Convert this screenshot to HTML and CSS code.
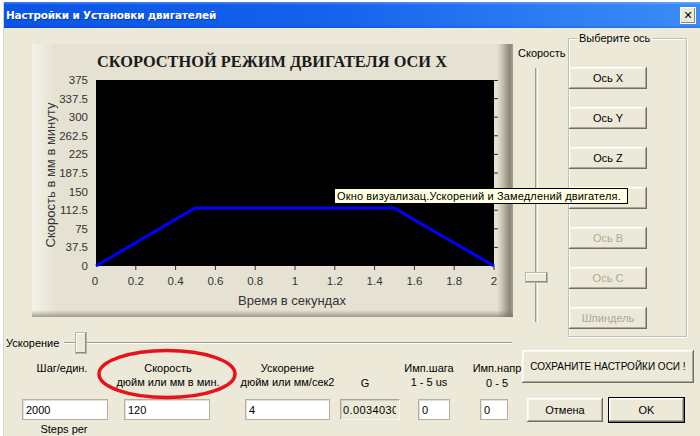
FILE: index.html
```html
<!DOCTYPE html>
<html lang="ru">
<head>
<meta charset="utf-8">
<title>Настройки и Установки двигателей</title>
<link rel="stylesheet" href="styles.css">
</head>
<body>
<div class="window">
  <div class="titlebar">
    <span class="title">Настройки и Установки двигателей</span>
    <span class="close">✕</span>
  </div>
  <div class="client">
    <div class="leftcol">
      <div class="chart">
        <svg class="chart-svg" width="481" height="273" viewBox="32 44 481 273" xmlns="http://www.w3.org/2000/svg">
          <text class="ctitle" x="97" y="67" textLength="350" lengthAdjust="spacingAndGlyphs">СКОРОСТНОЙ РЕЖИМ ДВИГАТЕЛЯ ОСИ X</text>
          <rect x="96" y="80" width="398" height="186" fill="#000"/>
          <g class="ticks" stroke="#2a2a2a" stroke-width="1">
            <path d="M494 80.5h4M494 98.6h4M494 117.2h4M494 135.8h4M494 154.4h4M494 173h4M494 191.6h4M494 210.2h4M494 228.8h4M494 247.4h4"/>
            <path d="M135.8 266v4M175.6 266v4M215.4 266v4M255.2 266v4M295 266v4M334.8 266v4M374.6 266v4M414.4 266v4M454.2 266v4M494 266v4"/>
          </g>
          <g class="ylab">
            <text x="88" y="84">375</text>
            <text x="88" y="102.6">337.5</text>
            <text x="88" y="121.2">300</text>
            <text x="88" y="139.8">262.5</text>
            <text x="88" y="158.4">225</text>
            <text x="88" y="177">187.5</text>
            <text x="88" y="195.6">150</text>
            <text x="88" y="214.2">112.5</text>
            <text x="88" y="232.8">75</text>
            <text x="88" y="251.4">37.5</text>
            <text x="88" y="270">0</text>
          </g>
          <g class="xlab">
            <text x="95" y="285">0</text>
            <text x="135.8" y="285">0.2</text>
            <text x="175.6" y="285">0.4</text>
            <text x="215.4" y="285">0.6</text>
            <text x="255.2" y="285">0.8</text>
            <text x="295" y="285">1</text>
            <text x="334.8" y="285">1.2</text>
            <text x="374.6" y="285">1.4</text>
            <text x="414.4" y="285">1.6</text>
            <text x="454.2" y="285">1.8</text>
            <text x="494" y="285">2</text>
          </g>
          <text class="axtitle" x="292" y="305">Время в секундах</text>
          <text class="axtitle" x="50" y="179.5" transform="rotate(-90 50 175)">Скорость в мм в минуту</text>
          <polyline points="96,266 195,208 394,208 494,266" fill="none" stroke="#0000ff" stroke-width="3" stroke-linejoin="miter"/>
        </svg>
      </div>
      <div class="accel">
        <span class="accel-label">Ускорение</span>
        <div class="hslider"><div class="hthumb"></div></div>
      </div>
      <div class="fields">
        <div class="field f1">
          <div class="lbl">Шаг/един.</div>
          <input type="text" value="2000">
          <div class="note">Steps per</div>
        </div>
        <div class="field f2">
          <div class="lbl"><span>Скорость</span><span>дюйм или мм в мин.</span></div>
          <input type="text" value="120">
        </div>
        <div class="field f3">
          <div class="lbl"><span>Ускорение</span><span>дюйм или мм/сек2</span></div>
          <input type="text" value="4">
        </div>
        <div class="field f4">
          <div class="lbl bottom">G</div>
          <input type="text" class="ro" value="0.00340304" readonly>
        </div>
        <div class="field f5">
          <div class="lbl"><span>Имп.шага</span><span>1 - 5 us</span></div>
          <input type="text" value="0">
        </div>
        <div class="field f6">
          <div class="lbl bottom2"><span>Имп.напр</span><span>0 - 5</span></div>
          <input type="text" value="0">
        </div>
      </div>
    </div>
    <div class="rightcol">
      <div class="topright">
        <div class="vslider-col">
          <div class="vlabel">Скорость</div>
          <div class="vtrack"><div class="vthumb"></div></div>
        </div>
        <fieldset class="axes">
          <legend>Выберите ось</legend>
          <button class="axbtn first">Ось X</button>
          <button class="axbtn">Ось Y</button>
          <button class="axbtn">Ось Z</button>
          <button class="axbtn"></button>
          <button class="axbtn dis">Ось B</button>
          <button class="axbtn dis">Ось C</button>
          <button class="axbtn dis">Шпиндель</button>
        </fieldset>
      </div>
      <button class="save">СОХРАНИТЕ НАСТРОЙКИ ОСИ !</button>
      <div class="okrow">
        <button class="cancel">Отмена</button>
        <button class="ok">OK</button>
      </div>
    </div>
  </div>
  <div class="tooltip">Окно визуализац.Ускорений и Замедлений двигателя.</div>
  <svg class="mark" width="144" height="54" viewBox="0 0 144 54" xmlns="http://www.w3.org/2000/svg">
    <ellipse cx="72" cy="27" rx="68" ry="23.5" fill="none" stroke="#e8121c" stroke-width="3.5"/>
  </svg>
</div>
</body>
</html>
```

FILE: styles.css
```css
* { box-sizing: border-box; }

body {
  margin: 0;
  background: #ffffff;
  font-family: "Liberation Sans", Arial, sans-serif;
  font-size: 11px;
  color: #000;
}

.window {
  position: relative;
  margin: 2px 0 0 3px;
  width: 697px;
  height: 434px;
  background: #ece9d8;
  border-left: 1px solid #d9d6c8;
}

.titlebar {
  height: 26px;
  display: flex;
  align-items: center;
  justify-content: space-between;
  padding: 0 4px 0 2px;
  background:
    linear-gradient(to bottom, rgba(255,255,255,0.25) 0, rgba(255,255,255,0) 3px, rgba(255,255,255,0) 23px, rgba(0,0,80,0.15) 100%),
    linear-gradient(to right, #0a55e6 0%, #1461ec 45%, #2f7ef4 80%, #3b8cf7 100%);
}

.title {
  color: #fff;
  font-family: "DejaVu Sans", Verdana, sans-serif;
  font-weight: bold;
  font-size: 10.5px;
  letter-spacing: -0.2px;
  text-shadow: 1px 1px 0 rgba(0, 0, 60, 0.35);
}

.close {
  width: 16px;
  height: 17px;
  display: flex;
  align-items: center;
  justify-content: center;
  background: #ece9d8;
  border: 1px solid #fff;
  box-shadow: inset -1px -1px #8e8a7c;
  font-family: "DejaVu Sans", sans-serif;
  font-weight: bold;
  font-size: 11px;
  color: #000;
}

.client {
  display: flex;
  height: 408px;
}

.leftcol {
  width: 509px;
}

.chart {
  margin: 16px 0 0 28px;
  width: 481px;
  height: 273px;
  background:
    linear-gradient(to bottom, rgba(0,0,0,0) 0, rgba(0,0,0,0) 266px, rgba(120,114,100,0.35) 270px, rgba(110,104,92,0.6) 273px),
    linear-gradient(to right, #f4f2e8 0, #eeebdf 10px, #e6e2d3 22px, #e6e2d3 465px, #cfcab9 469px, #a9a494 474px, #8b8678 478px, #a6a193 481px);
}

.chart-svg { display: block; }

.ctitle {
  font-family: "Liberation Serif", "Times New Roman", serif;
  font-weight: bold;
  font-size: 17px;
  fill: #1a1a1a;
}

.ylab text {
  font-family: "Liberation Sans", Arial, sans-serif;
  font-size: 11.5px;
  fill: #333;
  text-anchor: end;
}

.xlab text {
  font-family: "Liberation Sans", Arial, sans-serif;
  font-size: 11.5px;
  fill: #333;
  text-anchor: middle;
}

.axtitle {
  font-family: "Liberation Sans", Arial, sans-serif;
  font-size: 13px;
  fill: #333;
  text-anchor: middle;
}

.accel {
  display: flex;
  align-items: center;
  margin-top: 15px;
  height: 22px;
  padding-left: 2px;
}

.accel-label {
  width: 58px;
}

.hslider {
  width: 448px;
  height: 22px;
  display: flex;
  align-items: center;
  background: linear-gradient(to bottom, transparent 10px, #9d9a8c 10px, #9d9a8c 11px, #ffffff 11px, #ffffff 12px, transparent 12px);
}

.hthumb {
  margin-left: 11px;
  width: 12px;
  height: 22px;
  background: #ece9d8;
  border: 1px solid #b9b6a8;
  box-shadow: inset -1px -1px #8e8a7c, inset 1px 1px #fff;
}

.fields {
  display: flex;
  margin-top: 7px;
  padding-left: 18px;
}

.field {
  display: flex;
  flex-direction: column;
  align-items: center;
}

.lbl {
  height: 30px;
  line-height: 14px;
  display: flex;
  flex-direction: column;
  align-items: center;
  white-space: nowrap;
  text-align: center;
}

.lbl.bottom { justify-content: flex-end; padding-bottom: 1px; }
.lbl.bottom2 span + span { margin-top: 1px; }

.field input {
  margin-top: 8px;
  width: 100%;
  height: 21px;
  padding: 0 3px;
  font-family: "Liberation Sans", Arial, sans-serif;
  font-size: 11px;
  color: #000;
  background: #fff;
  border: 1px solid #b4b1a3;
  box-shadow: inset 1px 1px #e2dfd4;
  outline: none;
}

.field input.ro {
  background: #ece9d8;
  border-color: #a9a699 #f6f5ef #f6f5ef #a9a699;
  box-shadow: inset 1px 1px #d2cfc2;
  padding-left: 2px;
  letter-spacing: 0.4px;
}

.note {
  margin-top: 2px;
  line-height: 14px;
  white-space: nowrap;
}

.f1 { width: 86px; }
.f1 .lbl { margin-right: 6px; }
.f1 .note { margin-right: 2px; }
.f2 { width: 86px; margin-left: 16px; }
.f2 .lbl { margin-left: 2px; }
.f3 { width: 85px; margin-left: 35px; }
.f4 { width: 60px; margin-left: 10px; }
.f4 .lbl { margin-right: 10px; }
.f5 { width: 32px; margin-left: 18px; }
.f5 .lbl { margin-right: 10px; }
.f6 { width: 28px; margin-left: 30px; }
.f6 .lbl { margin-right: -6px; }

.rightcol {
  width: 187px;
}

.topright {
  display: flex;
}

.vslider-col {
  width: 55px;
  padding-left: 5px;
}

.vlabel {
  margin-top: 18px;
  line-height: 14px;
  white-space: nowrap;
}

.vtrack {
  position: relative;
  margin: 8px 0 0 17px;
  width: 3px;
  height: 254px;
  border-left: 1px solid #9d9a8c;
  border-right: 1px solid #ffffff;
  background: #d6d2c2;
}

.vthumb {
  position: absolute;
  top: 204px;
  left: -11px;
  width: 23px;
  height: 11px;
  background: #ece9d8;
  border: 1px solid #b9b6a8;
  box-shadow: inset -1px -1px #8e8a7c, inset 1px 1px #fff;
}

.axes {
  margin: 3px 0 0 0;
  padding: 0 0 7px 0;
  width: 119px;
  height: 306px;
  border: 1px solid #c3bfb0;
  box-shadow: inset 1px 1px #fff, 1px 1px #fff;
  min-inline-size: 0;
}

.axes legend {
  margin-left: 8px;
  padding: 0 2px;
  line-height: 14px;
}

button {
  font-family: "Liberation Sans", Arial, sans-serif;
  font-size: 11px;
  color: #000;
  background: #ece9d8;
  border: none;
  padding: 0;
  box-shadow: inset -1px -1px #716f64, inset 1px 1px #ffffff, inset -2px -2px #aca899, inset 2px 2px #f6f5f0;
}

.axbtn {
  display: block;
  width: 78px;
  height: 22px;
  margin-top: 18px;
}

.axbtn.first { margin-top: 22px; }

.axbtn.dis { color: #aca899; }

.save {
  display: block;
  margin: 13px 0 0 9px;
  width: 172px;
  height: 33px;
  font-size: 10px;
  white-space: nowrap;
}

.okrow {
  display: flex;
  align-items: center;
  margin-top: 14px;
  height: 26px;
}

.cancel {
  margin-left: 14px;
  width: 76px;
  height: 24px;
}

.ok {
  margin-left: 5px;
  width: 77px;
  height: 26px;
  border: 1px solid #000;
}

.tooltip {
  position: absolute;
  left: 330px;
  top: 186px;
  width: 294px;
  height: 16px;
  padding: 0 2px;
  line-height: 14px;
  white-space: nowrap;
  letter-spacing: 0.15px;
  background: #ffffe1;
  border: 1px solid #000;
}

.mark {
  position: absolute;
  left: 91px;
  top: 345px;
}
```
